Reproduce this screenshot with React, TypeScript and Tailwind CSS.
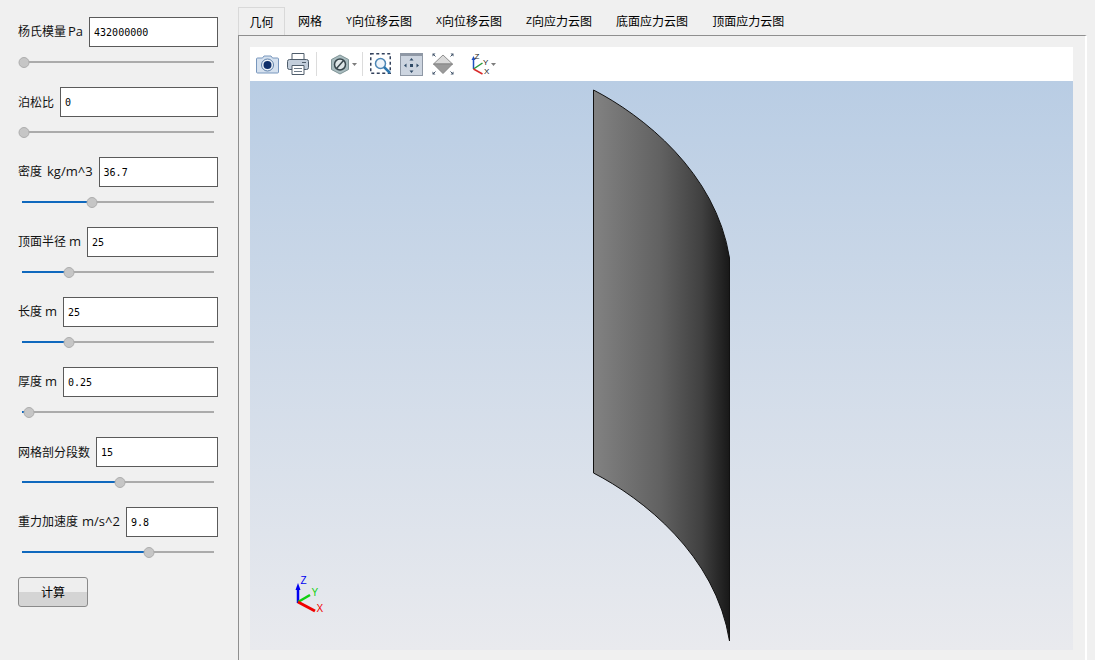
const params = [
  { name: "杨氏模量", unit: "Pa", unitClass: "ml-[2px]", value: "432000000", pct: 0.8 },
  { name: "泊松比", unit: "", unitClass: "", value: "0", pct: 0.8 },
  { name: "密度", unit: "kg/m^3", unitClass: "ml-[5px]", value: "36.7", pct: 36.7 },
  { name: "顶面半径", unit: "m", unitClass: "ml-[3px]", value: "25", pct: 24.7 },
  { name: "长度", unit: "m", unitClass: "ml-[3px]", value: "25", pct: 24.7 },
  { name: "厚度", unit: "m", unitClass: "ml-[3px]", value: "0.25", pct: 3.6 },
  { name: "网格剖分段数", unit: "", unitClass: "", value: "15", pct: 50.8 },
  { name: "重力加速度", unit: "m/s^2", unitClass: "ml-[4px]", value: "9.8", pct: 66.4 },
];

const tabs = [
  { prefix: "", text: "几何" },
  { prefix: "", text: "网格" },
  { prefix: "Y", text: "向位移云图" },
  { prefix: "X", text: "向位移云图" },
  { prefix: "Z", text: "向应力云图" },
  { prefix: "", text: "底面应力云图" },
  { prefix: "", text: "顶面应力云图" },
];

const ParamRow = ({ name, unit, unitClass, value, pct }: { name: string; unit: string; unitClass: string; value: string; pct: number }) => {
  return (
    <div className="flex flex-col h-[70px]">
      <div className="flex items-center h-[30px] gap-[6px]">
        <span className="text-[12px] text-[#111] whitespace-nowrap [font-family:'Noto_Sans_CJK_SC',sans-serif]">
          {name}
          {unit && <span className={`${unitClass} text-[13px] [font-family:'Open_Sans',sans-serif]`}>{unit}</span>}
        </span>
        <div className="flex-1 h-[30px] border border-[#5a5a5a] bg-white flex items-center pl-[4px] text-[10px] text-black [font-family:'DejaVu_Sans_Mono',monospace]">
          {value}
        </div>
      </div>
      <div className="relative h-[2px] mt-[14px] ml-[4px] mr-[4px] bg-[#ababab]">
        {pct > 1 && <div className="h-full bg-[#0f68bd]" style={{ width: `${pct}%` }} />}
        <div
          className="absolute top-[-4px] w-[11px] h-[11px] rounded-full bg-[#c6c6c6] border border-[#adadad] -translate-x-1/2"
          style={{ left: `${pct}%` }}
        />
      </div>
    </div>
  );
};

const Camera = () => (
  <svg width="23" height="24" viewBox="0 0 23 24">
    <path d="M1.500 6h5l1.500-2h7l1.500 2h5q1 0 1 1v13q0 1-1 1h-20q-1 0-1-1v-13q0-1 1-1z" fill="#d5e1ef" stroke="#7897bd" />
    <circle cx="11.500" cy="13" r="6" fill="#eef3f8" stroke="#5d7fa8" />
    <circle cx="11.500" cy="13" r="4" fill="#10306a" />
  </svg>
);

const Printer = () => (
  <svg width="22" height="24" viewBox="0 0 22 24">
    <path d="M5 1.500h12v6H5z" fill="#fff" stroke="#4f5d6b" />
    <rect x="0.500" y="7.500" width="21" height="10" rx="2" fill="#c3cedb" stroke="#4f5d6b" />
    <path d="M15 10.500h4" stroke="#4f5d6b" />
    <path d="M5 13.500h12v9H5z" fill="#fff" stroke="#4f5d6b" />
    <path d="M7 16.500h8M7 19.500h8" stroke="#6f7c89" />
  </svg>
);

const Hexagon = () => (
  <svg width="26" height="24" viewBox="0 0 26 24">
    <path d="M9 3l8.500 4.500v10L9 22 .5 17.500v-10z" fill="#a9bcbf" stroke="#7f9496" />
    <circle cx="9" cy="12.500" r="5.500" fill="#dfe7e8" stroke="#38474d" strokeWidth="1.500" />
    <path d="M5.500 16.500l7-8" stroke="#38474d" strokeWidth="1.500" />
    <path d="M21 11h5l-2.500 3z" fill="#7d7d7d" />
  </svg>
);

const ZoomBox = () => (
  <svg width="21" height="24" viewBox="0 0 21 24">
    <rect x="0.750" y="1.750" width="19.500" height="19.500" fill="none" stroke="#33415c" strokeWidth="1.500" strokeDasharray="3 2.500" />
    <circle cx="10.500" cy="11.500" r="5" fill="#eef4fa" stroke="#4d86b5" strokeWidth="1.500" />
    <path d="M14 15l6 6" stroke="#2d77b0" strokeWidth="2.500" />
  </svg>
);

const FitView = () => (
  <div className="w-[23px] h-[23px] bg-[#cdd5e0] border border-[#8f98a5] border-t-[3px] border-t-[#8f98a5] flex items-center justify-center">
    <svg width="17" height="17" viewBox="0 0 17 17" fill="#2f4a66">
      <path d="M8.500 1l2 2.500h-4zM8.500 16l2-2.500h-4zM1 8.500L3.500 6.500v4zM16 8.500l-2.500-2v4z" />
      <rect x="7" y="7" width="3" height="3" />
    </svg>
  </div>
);

const Diamond = () => (
  <svg width="22" height="24" viewBox="0 0 22 24">
    <path d="M11 3l9.500 9h-19z" fill="#d9d9d9" stroke="#8f8f8f" />
    <path d="M1.500 12h19L11 21.500z" fill="#9a9a9a" stroke="#858585" />
    <path d="M.5 1.500h3L.5 4.500zM21.500 1.500h-3l3 3zM.5 22.500h3l-3-3zM21.500 22.500h-3l3-3z" fill="#44566c" />
    <path d="M1 2l2.500 2.500M21 2l-2.500 2.500M1 22l2.500-2.500M21 22l-2.500-2.500" stroke="#44566c" />
  </svg>
);

const TriadIcon = () => (
  <svg width="25" height="24" viewBox="0 0 25 24">
    <path d="M2.500 17V7" stroke="#1f4fbf" strokeWidth="1.500" />
    <path d="M2.500 4l2 4h-4z" fill="#1f4fbf" />
    <path d="M2.500 17l9-6" stroke="#2a9a3a" strokeWidth="1.500" />
    <path d="M2.500 17l9 5" stroke="#d92a2a" strokeWidth="1.500" />
    <text x="3.500" y="7" fontSize="8" fill="#222" fontFamily="Liberation Sans">Z</text>
    <text x="12" y="13" fontSize="8" fill="#222" fontFamily="Liberation Sans">Y</text>
    <text x="13" y="22" fontSize="8" fill="#222" fontFamily="Liberation Sans">X</text>
    <path d="M20 11h5l-2.500 3z" fill="#7d7d7d" />
  </svg>
);

const Toolbar = () => (
  <div className="flex items-center h-[34px] bg-white pl-[6px]">
    <Camera />
    <div className="w-[8px]" />
    <Printer />
    <div className="w-px h-[24px] bg-[#dcdcdc] ml-[7px] mr-[14px]" />
    <Hexagon />
    <div className="w-px h-[24px] bg-[#dcdcdc] ml-[5px] mr-[7px]" />
    <ZoomBox />
    <div className="w-[9px]" />
    <FitView />
    <div className="w-[9px]" />
    <Diamond />
    <div className="w-[17px]" />
    <TriadIcon />
  </div>
);

const Viewer = () => (
  <div className="flex-1 bg-[linear-gradient(#b9cde4,#e9eaee)]">
    <svg viewBox="250 81 823 569" className="block w-full h-full">
      <defs>
        <linearGradient id="shade" x1="593" x2="729" y1="0" y2="0" gradientUnits="userSpaceOnUse">
          <stop offset="0" stopColor="#828282" />
          <stop offset="0.5" stopColor="#616161" />
          <stop offset="0.8" stopColor="#404040" />
          <stop offset="1" stopColor="#191919" />
        </linearGradient>
      </defs>
      <path
        d="M593.500 90C642 115 716 172 729.500 258V641C716 555 642 498 593.500 473Z"
        fill="url(#shade)"
        stroke="#111"
        strokeWidth="1"
      />
      <path d="M298 603V588" stroke="#0000f0" strokeWidth="2.500" />
      <path d="M298 583l2.500 7h-5z" fill="#0000f0" />
      <path d="M298 602l12-7" stroke="#10d010" strokeWidth="2.500" />
      <path d="M298 602l17 9" stroke="#f00000" strokeWidth="3" />
      <text x="300.500" y="584" fontSize="10" fill="#0000f0" fontFamily="Liberation Sans">Z</text>
      <text x="311.500" y="596" fontSize="10" fill="#10d010" fontFamily="Liberation Sans">Y</text>
      <text x="316.500" y="612" fontSize="10" fill="#f00000" fontFamily="Liberation Sans">X</text>
    </svg>
  </div>
);

export default function App() {
  return (
    <div className="flex w-[1095px] h-[660px] bg-[#f0f0f0] overflow-hidden">
      <aside className="w-[238px] shrink-0 flex flex-col pt-[17px] pl-[18px] pr-[20px]">
        {params.map((p) => (
          <ParamRow key={p.name} {...p} />
        ))}
        <button className="w-[70px] h-[30px] rounded-[3px] border border-[#8a8a8a] bg-[linear-gradient(#eeeeee_50%,#d4d4d4_50%)] text-[12px] text-black [font-family:'Noto_Sans_CJK_SC',sans-serif]">
          计算
        </button>
      </aside>
      <main className="flex flex-col w-[849px]">
        <div className="flex h-[35px] pt-[7px]">
          {tabs.map((t, i) => (
            <div
              key={t.text + i}
              className={
                i === 0
                  ? "w-[47px] h-[28px] mr-px flex items-center justify-center bg-[#f0f0f0] border border-[#d9d9d9] border-b-0 text-[12px] text-black [font-family:'Noto_Sans_CJK_SC',sans-serif]"
                  : "h-[28px] flex items-center justify-center px-[12px] text-[12px] text-black [font-family:'Noto_Sans_CJK_SC',sans-serif]"
              }
            >
              {t.prefix && <span className="text-[10px] [font-family:'Liberation_Mono',monospace]">{t.prefix}</span>}
              {t.text}
            </div>
          ))}
        </div>
        <div className="flex-1 flex flex-col border-t border-l border-[#8f8f8f] border-r-2 border-r-white pt-[11px] pl-[11px] pr-[12px] pb-[10px]">
          <Toolbar />
          <Viewer />
        </div>
      </main>
    </div>
  );
}
